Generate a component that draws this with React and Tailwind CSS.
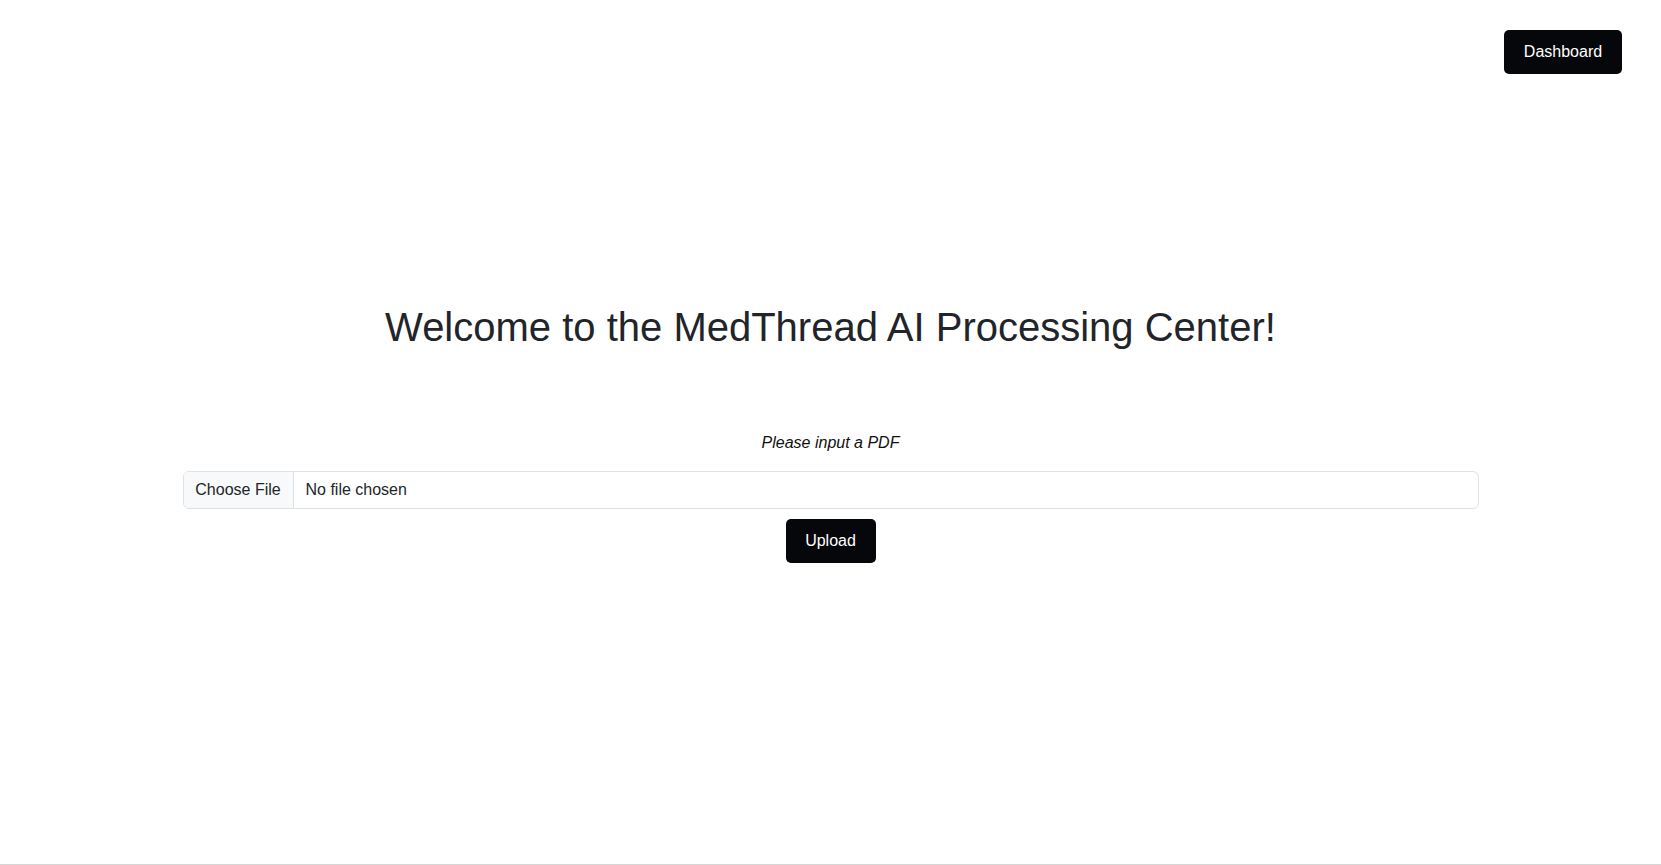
export default function App() {
  return (
    <div className="min-h-[865px] border-b border-[#d6d6d6] bg-white font-['Liberation_Sans',Arial,sans-serif] text-[#212529]">
      {/* top bar */}
      <div className="flex justify-end pt-[30px] pr-[39px]">
        <button className="h-[44px] w-[118px] rounded-[5px] bg-[#06070a] text-base text-white">
          Dashboard
        </button>
      </div>

      {/* title */}
      <h1 className="mt-[229px] text-center text-[40px] leading-[48px]">
        Welcome to the MedThread AI Processing Center!
      </h1>

      {/* upload form */}
      <div className="mx-auto mt-[80px] w-[1320px] px-3">
        <p className="text-center text-base leading-6 italic text-[#111]">Please input a PDF</p>
        <label className="mt-[16px] flex h-[38px] cursor-pointer items-stretch overflow-hidden rounded-[6px] border border-[#dee2e6] text-base">
          <input type="file" accept="application/pdf" className="hidden" />
          <span className="flex w-[110px] items-center justify-center border-r border-[#dee2e6] bg-[#f8f9fa] text-[#212529]">
            Choose File
          </span>
          <span className="flex items-center pl-[12px] text-[#212529]">No file chosen</span>
        </label>
        <div className="mt-[10px] flex justify-center">
          <button className="h-[44px] w-[90px] rounded-[5px] bg-[#06070a] text-base text-white">
            Upload
          </button>
        </div>
      </div>
    </div>
  );
}
